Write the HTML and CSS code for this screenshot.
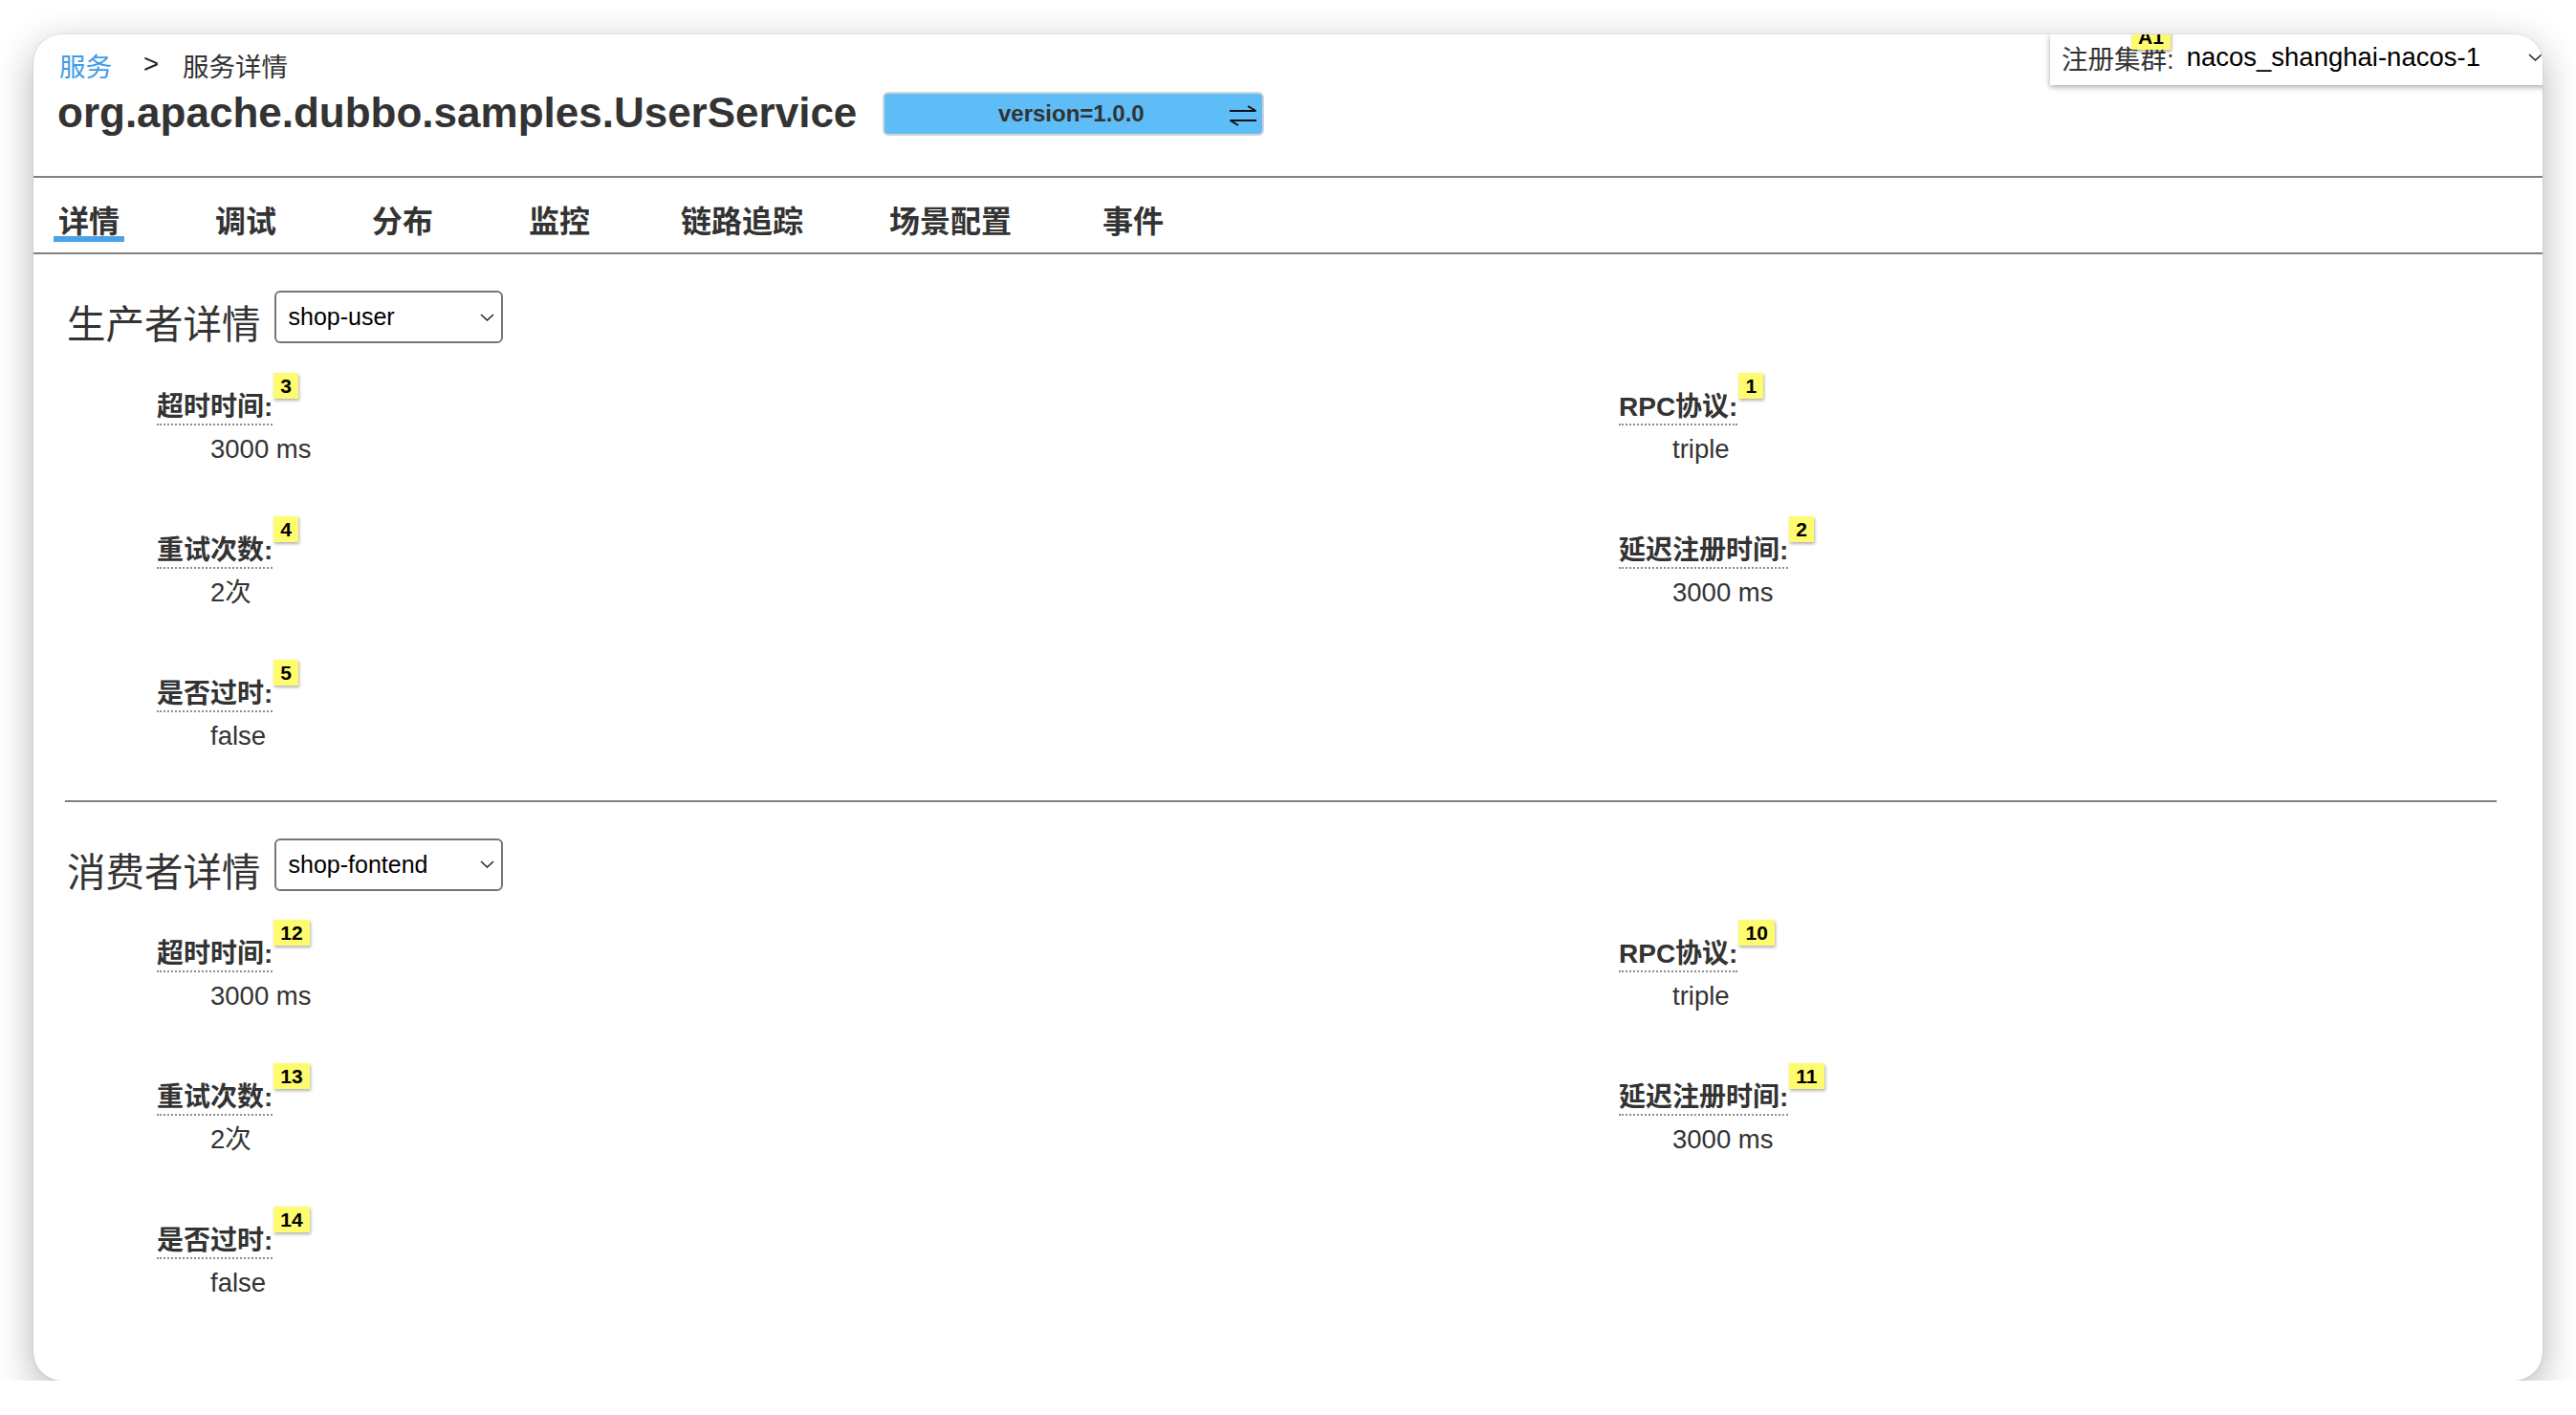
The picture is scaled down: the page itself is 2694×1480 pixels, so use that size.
FILE: index.html
```html
<!DOCTYPE html>
<html lang="zh-CN">
<head>
<meta charset="utf-8">
<title>服务详情</title>
<link rel="stylesheet" href="styles.css">
</head>
<body>
<div class="window">
  <header class="head">
    <nav class="crumbs"><a class="crumb-link" href="#">服务</a><span class="sep">&gt;</span><span class="crumb-cur">服务详情</span></nav>
    <div class="title-row">
      <h1 class="title">org.apache.dubbo.samples.UserService</h1>
      <div class="version">
        <span class="version-text">version=1.0.0</span>
        <svg class="swap" viewBox="0 0 30 22"><path d="M1 6H28.5M28.5 6L20 1M1.5 16H29M1.5 16L10 21" fill="none" stroke="#111" stroke-width="2"/></svg>
      </div>
    </div>
  </header>

  <div class="cluster">
    <span class="badge badge-a1">A1</span>
    <span class="cluster-label">注册集群:</span>
    <span class="cluster-value">nacos_shanghai-nacos-1<svg class="cluster-chev" viewBox="0 0 15 8"><path d="M1 1L7.5 7L14 1" fill="none" stroke="#222" stroke-width="1.5"/></svg></span>
  </div>

  <nav class="tabs">
    <span class="tab active">详情</span>
    <span class="tab">调试</span>
    <span class="tab">分布</span>
    <span class="tab">监控</span>
    <span class="tab">链路追踪</span>
    <span class="tab">场景配置</span>
    <span class="tab">事件</span>
  </nav>

  <main class="content">
    <section class="detail">
      <div class="detail-head">
        <h2 class="detail-title">生产者详情</h2>
        <div class="select"><span>shop-user</span><svg class="chev" viewBox="0 0 15 8"><path d="M1 1L7.5 7L14 1" fill="none" stroke="#222" stroke-width="1.5"/></svg></div>
      </div>
      <div class="fields">
        <div class="col">
          <div class="field"><span class="field-label">超时时间:<span class="badge">3</span></span><div class="field-value">3000 ms</div></div>
          <div class="field"><span class="field-label">重试次数:<span class="badge">4</span></span><div class="field-value">2次</div></div>
          <div class="field"><span class="field-label">是否过时:<span class="badge">5</span></span><div class="field-value">false</div></div>
        </div>
        <div class="col">
          <div class="field"><span class="field-label">RPC协议:<span class="badge">1</span></span><div class="field-value">triple</div></div>
          <div class="field"><span class="field-label">延迟注册时间:<span class="badge">2</span></span><div class="field-value">3000 ms</div></div>
        </div>
      </div>
    </section>

    <hr class="divider">

    <section class="detail">
      <div class="detail-head">
        <h2 class="detail-title">消费者详情</h2>
        <div class="select"><span>shop-fontend</span><svg class="chev" viewBox="0 0 15 8"><path d="M1 1L7.5 7L14 1" fill="none" stroke="#222" stroke-width="1.5"/></svg></div>
      </div>
      <div class="fields">
        <div class="col">
          <div class="field"><span class="field-label">超时时间:<span class="badge">12</span></span><div class="field-value">3000 ms</div></div>
          <div class="field"><span class="field-label">重试次数:<span class="badge">13</span></span><div class="field-value">2次</div></div>
          <div class="field"><span class="field-label">是否过时:<span class="badge">14</span></span><div class="field-value">false</div></div>
        </div>
        <div class="col">
          <div class="field"><span class="field-label">RPC协议:<span class="badge">10</span></span><div class="field-value">triple</div></div>
          <div class="field"><span class="field-label">延迟注册时间:<span class="badge">11</span></span><div class="field-value">3000 ms</div></div>
        </div>
      </div>
    </section>
  </main>
</div>
</body>
</html>
```

FILE: styles.css
```css
* { box-sizing: border-box; }
html, body { margin: 0; padding: 0; background: #fff; }
body {
  font-family: "Liberation Sans", "Noto Sans CJK SC", sans-serif;
  color: #333;
  overflow: hidden;
}

.window {
  position: relative;
  margin: 36px 0 0 35px;
  width: 2624px;
  height: 1408px;
  background: #fff;
  border-radius: 30px;
  overflow: hidden;
  box-shadow: 0 12px 40px rgba(0, 0, 0, 0.3), 0 0 2px rgba(0, 0, 0, 0.15);
}

/* header */
.head {
  height: 150px;
  padding: 15px 26px 0 25px;
  border-bottom: 2px solid #808080;
}
.crumbs {
  font-size: 27.5px;
  line-height: 32px;
  margin: 0 0 5px 2px;
}
.crumb-link { color: #3d9be8; text-decoration: none; }
.sep {
  display: inline-block;
  margin: 0 25px 0 33px;
  color: #222;
  vertical-align: 4px;
}
.crumb-cur { color: #333; }

.title-row { display: flex; align-items: center; }
.title {
  margin: 0;
  font-size: 44px;
  line-height: 52px;
  font-weight: 700;
  color: #333;
}
.version {
  margin: 2px 0 0 27px;
  width: 399px;
  height: 46px;
  display: grid;
  grid-template-columns: 1fr auto 1fr;
  align-items: center;
  padding: 0 5px 0 0;
  background: #5ebcf7;
  border: 2px solid #d4d4d4;
  border-radius: 6px;
  font-size: 24px;
  font-weight: 700;
  color: #333;
}
.version-text { grid-column: 2; }
.swap {
  grid-column: 3;
  justify-self: end;
  width: 30px;
  height: 22px;
  margin-top: 4px;
}

/* cluster selector */
.cluster {
  position: absolute;
  top: 0;
  left: 2109px;
  width: 560px;
  height: 53px;
  display: flex;
  align-items: center;
  padding: 0 0 5px 12px;
  background: #fff;
  box-shadow: 0 2px 6px rgba(0, 0, 0, 0.35);
  font-size: 27.5px;
  z-index: 2;
}
.cluster-label { color: #333; }
.cluster-value {
  margin-left: 13px;
  color: #000;
  display: flex;
  align-items: center;
}
.cluster-chev { margin-left: 50px; width: 15px; height: 8px; }

/* badges */
.badge {
  position: absolute;
  height: 27px;
  padding: 0 7px;
  background: #fffb6f;
  color: #000;
  font-family: "Liberation Sans", sans-serif;
  font-size: 21px;
  font-weight: 700;
  line-height: 27px;
  box-shadow: 1px 2px 3px rgba(0, 0, 0, 0.3);
  white-space: nowrap;
  z-index: 3;
}
.badge-a1 { left: 85px; top: -11px; }

/* tabs */
.tabs {
  height: 80px;
  padding: 32px 0 0 21px;
  border-bottom: 2px solid #808080;
  display: flex;
  align-items: flex-start;
}
.tab {
  min-width: 74px;
  margin-right: 90px;
  height: 35px;
  text-align: center;
  font-size: 32px;
  font-weight: 700;
  line-height: 29px;
  color: #333;
  border-bottom: 6px solid transparent;
}
.tab.active { border-bottom-color: #4aa3e9; }

/* content */
.content { padding: 0 48px 0 33px; }
.detail { padding-top: 38px; }
.detail-head { display: flex; align-items: flex-end; }
.detail-title {
  margin: 0 14px 0 2px;
  font-size: 40.5px;
  font-weight: 400;
  line-height: 44px;
  color: #333;
}
.select {
  width: 239px;
  height: 55px;
  margin-bottom: 3px;
  display: flex;
  align-items: center;
  justify-content: space-between;
  padding: 0 7px 0 13px;
  border: 2px solid #767676;
  border-radius: 6px;
  font-size: 25px;
  color: #000;
}
.chev { width: 15px; height: 8px; }

.fields {
  display: grid;
  grid-template-columns: 1529px auto;
  margin-top: 47.5px;
  padding-left: 96px;
}
.field { margin-bottom: 74px; }
.field:last-child { margin-bottom: 0; }
.field-label {
  position: relative;
  display: inline-block;
  font-size: 28px;
  font-weight: 700;
  line-height: 32px;
  padding-bottom: 1px;
  border-bottom: 2px dotted #8c8c8c;
  color: #333;
}
.field-label .badge { left: calc(100% + 1px); top: -20px; }
.field-value {
  margin-top: 9px;
  padding-left: 56px;
  font-size: 27.5px;
  line-height: 32px;
  color: #333;
}

.divider {
  margin: 51px 0 0 0;
  height: 0;
  border: 0;
  border-top: 2px solid #808080;
}
```
